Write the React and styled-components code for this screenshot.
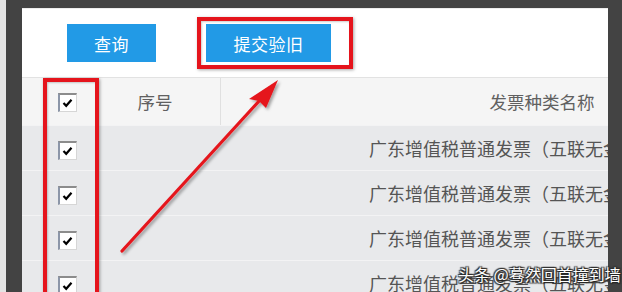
import React from 'react'
import styled, { createGlobalStyle } from 'styled-components'

const Global = createGlobalStyle`
  html, body {
    margin: 0;
    padding: 0;
    background: #444;
    overflow: hidden;
  }
  body {
    font-family: "Noto Sans CJK SC", "Noto Sans", sans-serif;
  }
`

const Page = styled.div`
  position: relative;
  width: 622px;
  height: 292px;
  box-sizing: border-box;
  background: #434343;
  border-left: 6px solid #e4e4e4;
  padding: 8px 14px 0 16px;
  overflow: hidden;
`

const Panel = styled.div`
  height: 100%;
  background: #fff;
  border-top: 1px solid #ececec;
  overflow: hidden;
`

const Toolbar = styled.div`
  display: flex;
  align-items: center;
  gap: 50px;
  height: 68px;
  padding: 0 0 0 45px;
  box-sizing: border-box;
`

const Button = styled.div`
  width: ${p => p.$w}px;
  height: 38px;
  background: #229ae6;
  color: #fff;
  font-size: 17px;
  display: flex;
  align-items: center;
  justify-content: center;
  letter-spacing: 0.5px;
`

const Table = styled.div`
  width: 900px;
`

const Row = styled.div`
  display: grid;
  grid-template-columns: 90px 108px 1fr;
  height: ${p => (p.$head ? 48 : 45)}px;
  background: ${p => (p.$head ? '#f5f5f5' : '#e8e9eb')};
  border-top: 1px solid ${p => (p.$head ? '#e2e2e2' : '#f3f3f4')};
  box-sizing: border-box;
  color: ${p => (p.$head ? '#606060' : '#555')};
  font-size: ${p => (p.$head ? 17.5 : 18)}px;
`

const Cell = styled.div`
  display: flex;
  align-items: center;
  justify-content: ${p => p.$align || 'center'};
  padding: ${p => p.$pad || '0'};
  border-left: ${p => (p.$divider ? '1px solid #e0e0e0' : 'none')};
  white-space: nowrap;
`

const NameHead = styled(Cell)`
  width: 642px;
`

const Box = styled.div`
  width: 16px;
  height: 16px;
  background: #fff;
  border-top: 2px solid #8c8c8c;
  border-left: 2px solid #8c96a8;
  border-right: 1px solid #d6d6d6;
  border-bottom: 1px solid #d6d6d6;
  display: flex;
  align-items: center;
  justify-content: center;
  margin-top: ${p => (p.$head ? '2px' : '4px')};
`

const Highlight = styled.div`
  position: absolute;
  left: ${p => p.$x}px;
  top: ${p => p.$y}px;
  width: ${p => p.$w}px;
  height: ${p => p.$h}px;
  border: 4px solid #e5141c;
  box-sizing: border-box;
  box-shadow: 1px 1px 3px rgba(0, 0, 0, 0.35), inset 1px 1px 2px rgba(0, 0, 0, 0.2);
  pointer-events: none;
`

const Overlay = styled.svg`
  position: absolute;
  left: 0;
  top: 0;
  pointer-events: none;
`

const Watermark = styled.div`
  position: absolute;
  left: 452px;
  top: 262px;
  font-size: 16px;
  color: #fff;
  white-space: nowrap;
  text-shadow: 0 0 2px #222, 1px 1px 1px #222, -1px -1px 1px #333, 1px -1px 1px #333, -1px 1px 1px #333;
`

const Check = ({ head }) => (
  <Box $head={head}>
    <svg width="11" height="10" viewBox="0 0 11 10">
      <path d="M1.5 5 L4.2 7.8 L9.5 1.8" fill="none" stroke="#000" strokeWidth="2.2" />
    </svg>
  </Box>
)

const rows = [1, 2, 3, 4]

const App = () => {
  return (
    <>
      <Global />
      <Page>
        <Panel>
          <Toolbar>
            <Button $w={89}>查询</Button>
            <Button $w={125}>提交验旧</Button>
          </Toolbar>
          <Table>
            <Row $head>
              <Cell><Check head /></Cell>
              <Cell $pad="0 22px 0 0">序号</Cell>
              <NameHead $divider>发票种类名称</NameHead>
            </Row>
            {rows.map(r => (
              <Row key={r}>
                <Cell><Check /></Cell>
                <Cell />
                <Cell $align="flex-start" $pad="0 0 0 149px">广东增值税普通发票（五联无金额限制）</Cell>
              </Row>
            ))}
          </Table>
        </Panel>

        <Highlight $x={191} $y={17} $w={156} $h={52} />
        <Highlight $x={37} $y={78} $w={56} $h={230} />

        <Overlay width="622" height="292" viewBox="0 0 622 292">
          <defs>
            <filter id="sh" x="-20%" y="-20%" width="140%" height="140%">
              <feDropShadow dx="2" dy="2" stdDeviation="1.5" floodColor="#000" floodOpacity="0.35" />
            </filter>
          </defs>
          <g filter="url(#sh)">
            <line x1="116" y1="251" x2="254" y2="100" stroke="#e5141c" strokeWidth="3.2" strokeLinecap="round" />
            <polygon points="272,80 260,108 253,101 243,99" fill="#e5141c" />
          </g>
        </Overlay>

        <Watermark>头条 @蓦然回首撞到墙</Watermark>
      </Page>
    </>
  )
}

export default App
